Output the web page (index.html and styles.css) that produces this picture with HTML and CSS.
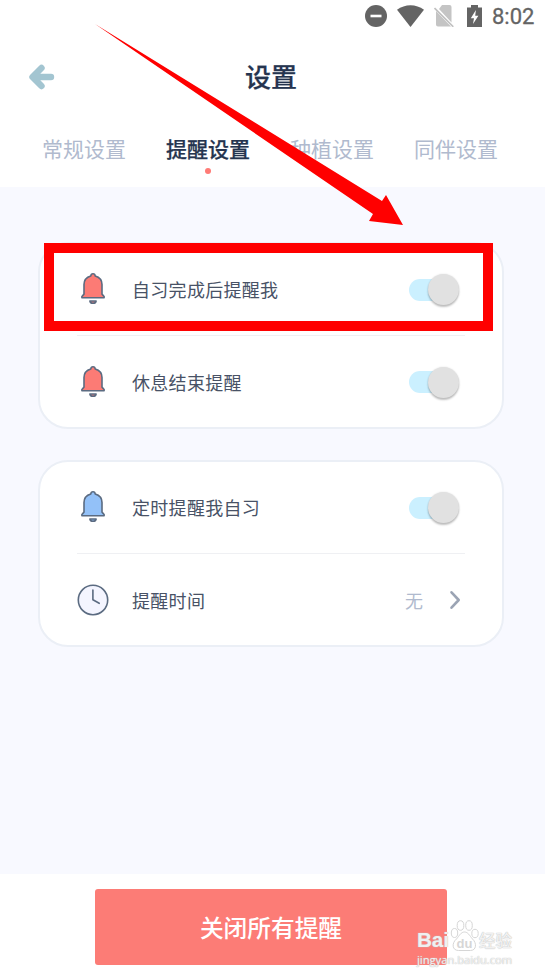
FILE: index.html
```html
<!DOCTYPE html>
<html lang="zh-CN">
<head>
<meta charset="utf-8">
<title>设置</title>
<link rel="stylesheet" href="styles.css">
</head>
<body>
<svg class="defs" width="0" height="0" aria-hidden="true">
  <symbol id="bell" viewBox="0 0 32 34">
    <path d="M4.9 25.700V24.500L7 22.100V12.600C7 8.200 9.800 5 13.800 3.900C14 1 18 1 18.200 3.900C22.200 5 25 8.200 25 12.600V22.100L27.100 24.500V25.700Z" fill="var(--bell)" stroke="#5b6b81" stroke-width="1.6" stroke-linejoin="round"/>
    <path d="M12.900 29H19.100C18.600 32 13.400 32 12.900 29Z" fill="var(--bell)" stroke="#5b6b81" stroke-width="1.6" stroke-linejoin="round"/>
  </symbol>
</svg>
<div class="screen">
  <header class="header">
    <div class="status">
      <svg width="22" height="22" viewBox="0 0 22 22"><circle cx="11" cy="11" r="11" fill="#646464"/><path d="M5.5 11H16.5" stroke="#fff" stroke-width="2.6"/></svg>
      <svg class="wifi" width="27" height="22" viewBox="0 0 27 22"><path d="M0 4.700C8-1.400 19-1.400 27 4.700L13.500 22Z" fill="#646464"/></svg>
      <svg class="sim" width="20" height="22" viewBox="0 0 20 22"><path d="M8 0H15.500Q17.500 0 17.500 2V17.500L5 4ZM2 6L17 21.500H4Q2 21.500 2 19.500Z" fill="#c4c4c4"/><path d="M.5 3L19.300 21.800" stroke="#c0c0c0" stroke-width="1.700"/></svg>
      <svg class="battery" width="15" height="22" viewBox="0 0 15 22"><path d="M4 0H11V2.500H15V22H0V2.500H4Z" fill="#646464"/><path d="M8.900 5L3.800 13.200H7L6 19L11.400 10.700H8.200Z" fill="#fff"/></svg>
      <span class="time">8:02</span>
    </div>
    <div class="titlebar">
      <svg class="back" width="26" height="26" viewBox="0 0 26 26"><path d="M12.500 4L3.500 13L12.500 22M4 13H22" fill="none" stroke="#a3c5d1" stroke-width="6.400" stroke-linecap="round" stroke-linejoin="round"/></svg>
      <h1>设置</h1>
    </div>
    <nav class="tabs">
      <span>常规设置</span>
      <span class="active">提醒设置</span>
      <span>种植设置</span>
      <span>同伴设置</span>
    </nav>
  </header>
  <main class="main">
    <section class="card">
      <div class="row"><svg class="icon red"><use href="#bell"/></svg><span class="label">自习完成后提醒我</span><span class="switch"><i></i></span></div>
      <hr>
      <div class="row"><svg class="icon red"><use href="#bell"/></svg><span class="label">休息结束提醒</span><span class="switch"><i></i></span></div>
    </section>
    <section class="card">
      <div class="row"><svg class="icon blue"><use href="#bell"/></svg><span class="label">定时提醒我自习</span><span class="switch"><i></i></span></div>
      <hr>
      <div class="row"><svg class="icon" viewBox="0 0 32 34"><circle cx="16" cy="17" r="14.700" fill="#f4f5ff" stroke="#5b6b81" stroke-width="1.600"/><path d="M15.900 7V16.800L22.200 20.300" fill="none" stroke="#5b6b81" stroke-width="1.600" stroke-linecap="round" stroke-linejoin="round"/></svg><span class="label">提醒时间</span><span class="value">无</span><svg class="chevron" width="12" height="20" viewBox="0 0 12 20"><path d="M2.500 2.300L9.700 10L2.500 17.700" fill="none" stroke="#9ba4b4" stroke-width="2.600" stroke-linecap="round" stroke-linejoin="round"/></svg></div>
    </section>
  </main>
  <footer class="footer">
    <button>关闭所有提醒</button>
  </footer>
  <div class="highlight"></div>
  <svg class="arrow" width="310" height="203" viewBox="0 0 310 203"><path d="M0 0L287 177L291 171L308 201L274 197L278 190Z" fill="#f00"/></svg>
  <div class="watermark">
    <div class="brand"><span class="bai">Bai</span><svg width="29" height="33" viewBox="0 0 29 33"><g fill="#fff" fill-opacity=".75" stroke="#d6d6d6" stroke-width="1"><ellipse cx="4.500" cy="14" rx="3.200" ry="4.500"/><ellipse cx="10.500" cy="6.500" rx="3.300" ry="4.800"/><ellipse cx="19" cy="6.500" rx="3.300" ry="4.800"/><ellipse cx="25" cy="14.500" rx="3.200" ry="4.200"/><path d="M14.500 13C18 13 19.500 16.500 22.500 20C27 24 26.500 31.500 20.500 31.500H8.500C2 31.500 1.500 24 6.500 20C9.500 16.500 11 13 14.500 13Z"/></g><text x="14.500" y="28.500" text-anchor="middle">du</text></svg><span class="jy">经验</span></div>
    <div class="url">jingyan.baidu.com</div>
  </div>
</div>
</body>
</html>
```
FILE: styles.css
```css
* { box-sizing: border-box; }
body {
  margin: 0;
  background: #fff;
  font-family: "Noto Sans CJK SC", sans-serif;
  color: #485266;
}
.defs { position: absolute; }
.screen {
  position: relative;
  width: 545px;
  height: 979px;
  display: flex;
  flex-direction: column;
  overflow: hidden;
}
.header { height: 187px; background: #fff; }
.status {
  height: 32px;
  padding-right: 10px;
  display: flex;
  align-items: center;
  justify-content: flex-end;
}
.status svg { margin-top: -1px; }
.status .wifi { margin-left: 10px; }
.status .sim { margin-left: 10px; }
.status .battery { margin-left: 13px; }
.time {
  margin-left: 10px;
  width: 43px;
  padding-top: 1px;
  font: 400 22px/32px Roboto, sans-serif;
  -webkit-text-stroke: .3px #646464;
  color: #646464;
  white-space: nowrap;
}
.titlebar {
  height: 90px;
  padding: 0 30px 0 29px;
  display: grid;
  grid-template-columns: 26px 1fr 28px;
  align-items: center;
}
h1 {
  margin: 0;
  padding-bottom: 2px;
  text-align: center;
  font-size: 26px;
  line-height: 36px;
  font-weight: 500;
  color: #25344f;
  -webkit-text-stroke: .25px #25344f;
}
.tabs {
  padding: 10px 47px 0 42px;
  display: flex;
  justify-content: space-between;
  font-size: 21px;
  line-height: 32px;
  color: #b0bace;
}
.tabs .active { color: #25344f; font-weight: 500; -webkit-text-stroke: .25px #25344f; }
.tabs .active::after {
  content: "";
  display: block;
  width: 6px;
  height: 6px;
  margin: 4px auto 0;
  border-radius: 50%;
  background: #ff7b76;
}
.main {
  height: 687px;
  padding: 55px 41px 0 38px;
  background: #f8f9ff;
  display: flex;
  flex-direction: column;
  gap: 31px;
}
.card {
  height: 187px;
  border: 2px solid #ebeff6;
  border-radius: 30px;
  background: #fff;
  padding: 0 37px;
}
.row { height: 91px; display: flex; align-items: center; }
.row + hr + .row { height: 92px; }
.icon { width: 32px; height: 34px; margin-top: -1px; }
.label { flex: 1; margin-left: 23px; font-size: 18px; letter-spacing: .3px; line-height: 26px; padding-bottom: 1px; }
.red { --bell: #fc7b75; }
.blue { --bell: #93c1f8; }
.card hr { margin: 0; height: 1px; border: 0; background: #eff0f3; }
.switch {
  width: 49px;
  height: 22px;
  margin-right: 7px;
  border-radius: 11px;
  background: #cbf0ff;
  display: flex;
  align-items: center;
  justify-content: flex-end;
}
.switch i {
  width: 31px;
  height: 31px;
  margin-right: -1px;
  flex: none;
  border-radius: 50%;
  background: #e1e1e1;
  box-shadow: 0 2px 2px rgba(0,0,0,.24), 0 0 2px rgba(0,0,0,.12);
}
.value { font-size: 18px; line-height: 26px; color: #b0bace; padding-bottom: 1px; margin-right: 26px; }
.chevron { margin-right: 4px; }
.footer { flex: 1; padding: 15px 0 0 95px; background: #fff; }
button {
  display: block;
  width: 352px;
  height: 76px;
  padding: 0;
  border: 0;
  border-radius: 3px;
  background: #fc7c76;
  color: #fff;
  font: 500 23.7px/36px "Noto Sans CJK SC", sans-serif;
}
.highlight {
  position: absolute;
  left: 44px;
  top: 243px;
  width: 449px;
  height: 88px;
  border: 10px solid #f00;
}
.arrow { position: absolute; left: 95px; top: 24px; }
.watermark {
  position: absolute;
  left: 417px;
  top: 919px;
  width: 100px;
  color: rgba(255,255,255,.8);
  text-shadow: 0 0 1px #bbb, 0 0 1px #ccc;
}
.brand { display: flex; align-items: flex-end; height: 33px; }
.bai { font: 700 20.5px/22px "Liberation Sans", sans-serif; width: 33px; margin-bottom: -1px; padding-bottom: 2px; }
.brand svg { flex: none; }
.brand text { font: 700 13px "Liberation Sans", sans-serif; fill: #d6d6d6; text-shadow: none; }
.jy { font-size: 16.5px; line-height: 21px; font-weight: 500; white-space: nowrap; padding-bottom: 1px; }
.url { font: 11.2px/14px "Open Sans", sans-serif; white-space: nowrap; padding-top: 1px; }
```
